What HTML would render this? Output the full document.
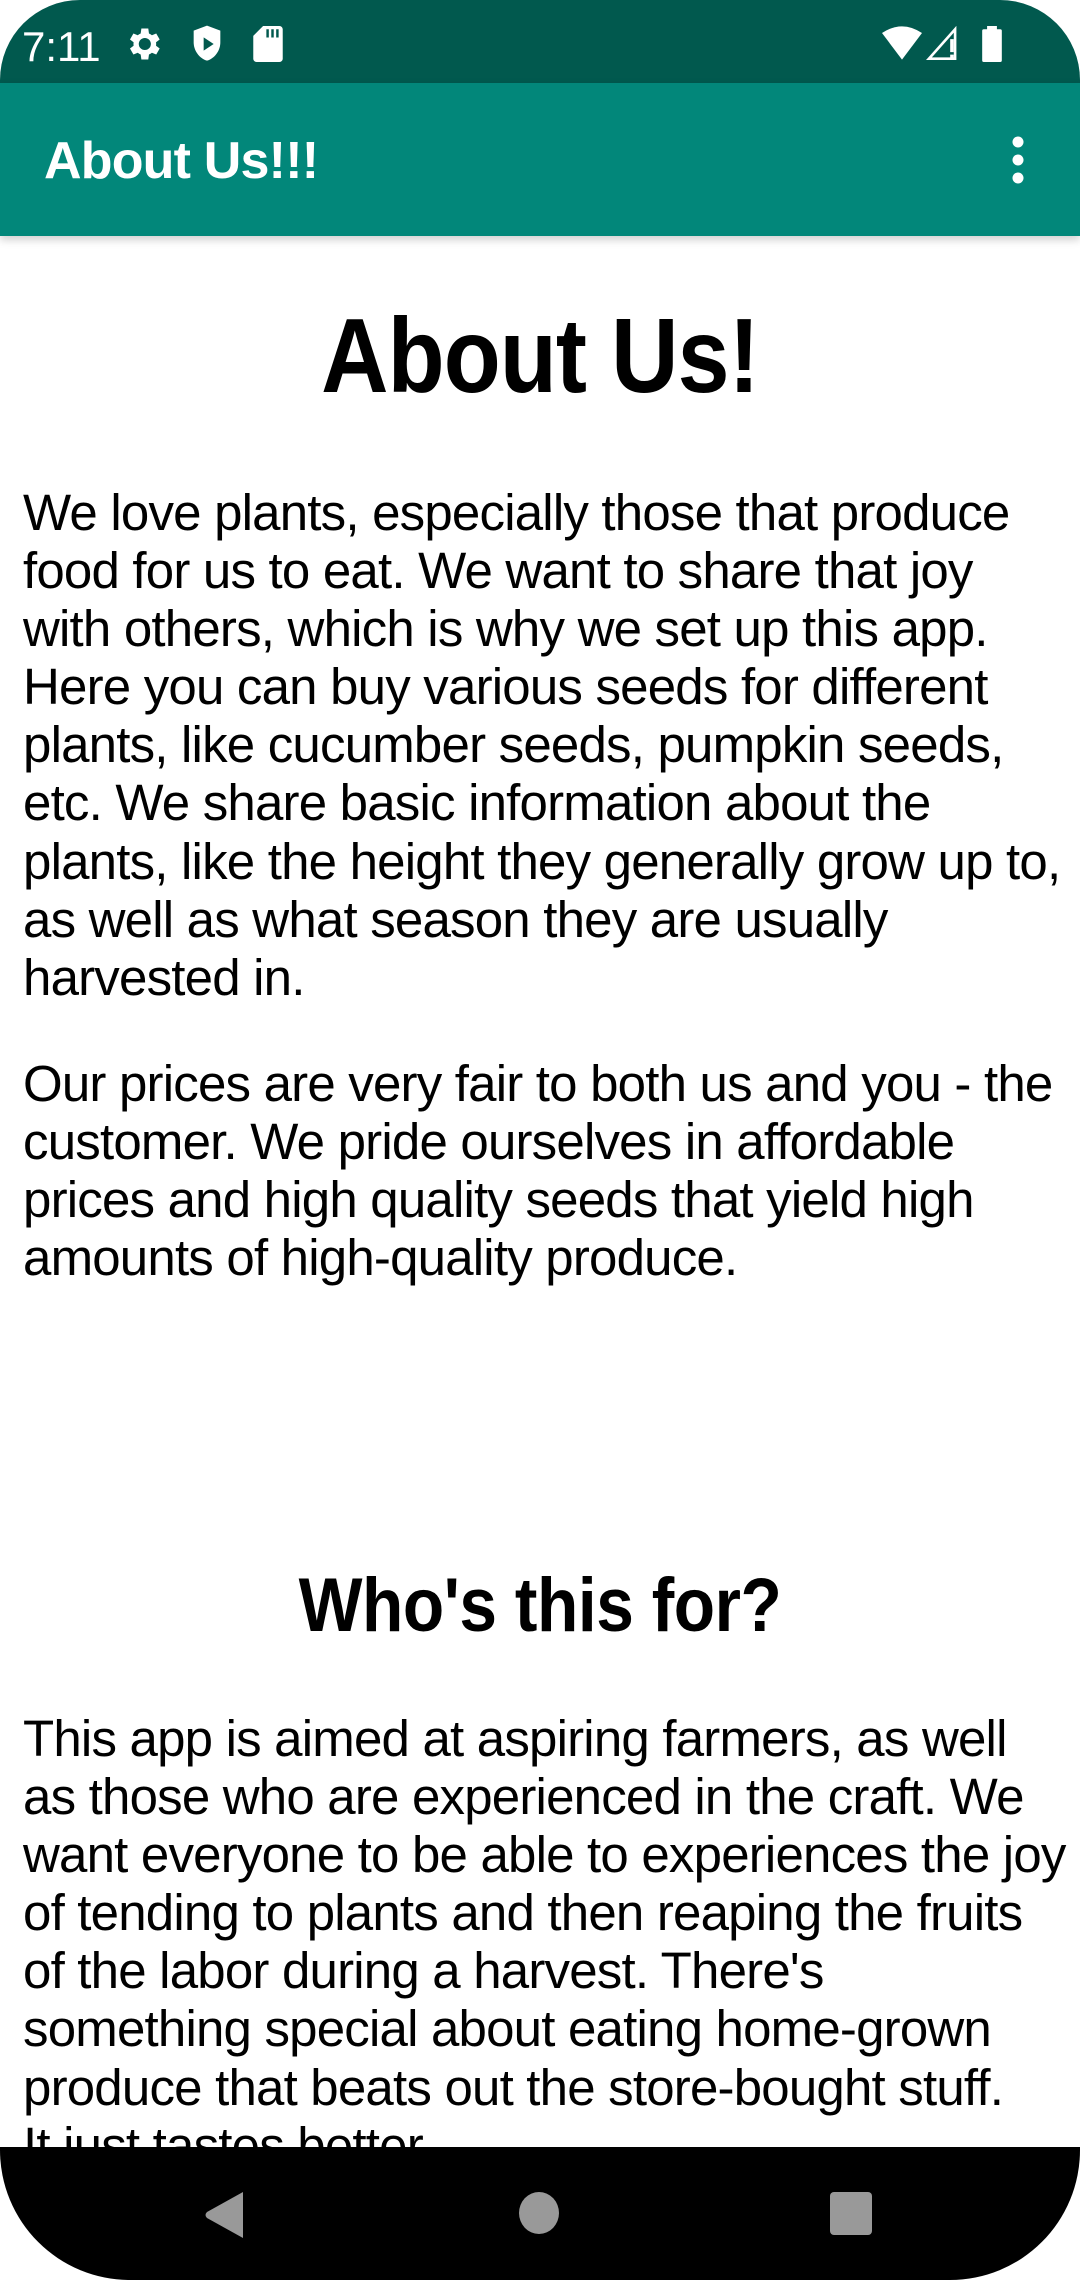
<!DOCTYPE html>
<html><head><meta charset="utf-8"><style>
html,body{margin:0;padding:0;background:#fff;}
body{width:1080px;height:2280px;position:relative;overflow:hidden;font-family:"Liberation Sans",Arial,sans-serif;}
.sb{position:absolute;left:0;top:0;width:1080px;height:83px;background:#01594E;border-radius:80px 80px 0 0;}
.ab{position:absolute;left:0;top:83px;width:1080px;height:153px;background:#02877A;box-shadow:0 4px 8px rgba(0,0,0,.18);}
.t{position:absolute;color:#fff;}
.p{position:absolute;left:23px;font-size:51px;line-height:58.1px;color:#000;white-space:nowrap;letter-spacing:-0.8px;}
.h{position:absolute;left:0;width:1080px;text-align:center;font-weight:bold;color:#000;}
.nav{position:absolute;left:0;top:2147px;width:1080px;height:133px;background:#000;border-radius:0 0 130px 130px;}
</style></head><body>
<div class="sb">
 <div class="t" style="left:22px;top:23px;font-size:42px;">7:11</div>
 <svg style="position:absolute;left:126px;top:25px" width="38" height="38" viewBox="2 1 22 22"><path fill="#fff" d="M19.4 13a7.5 7.5 0 0 0 0-2l2.1-1.6-2-3.5-2.5 1a7 7 0 0 0-1.7-1L14.9 3h-4l-.4 2.9a7 7 0 0 0-1.7 1l-2.5-1-2 3.5L6.4 11a7.5 7.5 0 0 0 0 2l-2.1 1.6 2 3.5 2.5-1a7 7 0 0 0 1.7 1l.4 2.9h4l.4-2.9a7 7 0 0 0 1.7-1l2.5 1 2-3.5zM12.9 15.5a3.5 3.5 0 1 1 0-7 3.5 3.5 0 0 1 0 7z"/></svg>
 <svg style="position:absolute;left:190px;top:24px" width="34" height="40" viewBox="0 0 20 24"><path fill="#fff" d="M10 1 2 4v7c0 5 3.4 9.6 8 11 4.6-1.4 8-6 8-11V4z"/><path fill="#01594E" d="M8 8v8l6-4z"/></svg>
 <svg style="position:absolute;left:253px;top:26px" width="30" height="36" viewBox="0 0 18 22"><path fill="#fff" d="M6 0h10a2 2 0 0 1 2 2v18a2 2 0 0 1-2 2H2a2 2 0 0 1-2-2V6z"/><path fill="#01594E" d="M8 2h1.5v5H8zM11 2h1.5v5H11zM14 2h1.5v5H14z"/></svg>
 <svg style="position:absolute;left:882px;top:26px" width="40" height="34" viewBox="0 0 24 20"><path fill="#fff" d="M12 20 0 4Q12-4 24 4z"/></svg>
 <svg style="position:absolute;left:925px;top:26px" width="34" height="36" viewBox="0 0 20 22"><path fill="none" stroke="#fff" stroke-width="1.6" d="M2 20 18 2v18z"/><path fill="#fff" d="M15 8h2.2v8H15zM15 17.5h2.2v2.2H15z"/></svg>
 <svg style="position:absolute;left:981px;top:26px" width="22" height="36" viewBox="0 0 12 22"><path fill="#fff" d="M3 0h6v2h2a1 1 0 0 1 1 1v18a1 1 0 0 1-1 1H1a1 1 0 0 1-1-1V3a1 1 0 0 1 1-1h2z"/></svg>
</div>
<div class="ab">
 <div class="t" style="left:44px;top:48px;font-size:52px;font-weight:bold;letter-spacing:-0.8px;">About Us!!!</div>
 <svg style="position:absolute;left:1008px;top:52px" width="20" height="50" viewBox="0 0 20 50"><circle cx="10" cy="7" r="5.5" fill="#fff"/><circle cx="10" cy="25" r="5.5" fill="#fff"/><circle cx="10" cy="43" r="5.5" fill="#fff"/></svg>
</div>
<div class="h" style="top:293px;font-size:106px;line-height:126px;letter-spacing:-1px;transform:scaleX(0.88);">About Us!</div>
<div class="p" style="top:484px;">We love plants, especially those that produce<br>food for us to eat. We want to share that joy<br>with others, which is why we set up this app.<br>Here you can buy various seeds for different<br>plants, like cucumber seeds, pumpkin seeds,<br>etc. We share basic information about the<br>plants, like the height they generally grow up to,<br>as well as what season they are usually<br>harvested in.</div>
<div class="p" style="top:1055px;">Our prices are very fair to both us and you - the<br>customer. We pride ourselves in affordable<br>prices and high quality seeds that yield high<br>amounts of high-quality produce.</div>
<div class="h" style="top:1560px;font-size:76px;line-height:92px;letter-spacing:-0.5px;transform:scaleX(0.89);">Who's this for?</div>
<div class="p" style="top:1710px;">This app is aimed at aspiring farmers, as well<br>as those who are experienced in the craft. We<br>want everyone to be able to experiences the joy<br>of tending to plants and then reaping the fruits<br>of the labor during a harvest. There's<br>something special about eating home-grown<br>produce that beats out the store-bought stuff.<br>It just tastes better.</div>
<div class="nav">
 <svg style="position:absolute;left:205px;top:45px" width="40" height="46" viewBox="0 0 40 46"><path fill="#999" d="M38 0v46L2 26q-3-3 0-6z"/></svg>
 <svg style="position:absolute;left:519px;top:45px" width="40" height="42"><ellipse cx="20" cy="21" rx="20" ry="21" fill="#999"/></svg>
 <svg style="position:absolute;left:830px;top:45px" width="42" height="43"><rect width="42" height="43" rx="4" fill="#999"/></svg>
</div>
</body></html>
